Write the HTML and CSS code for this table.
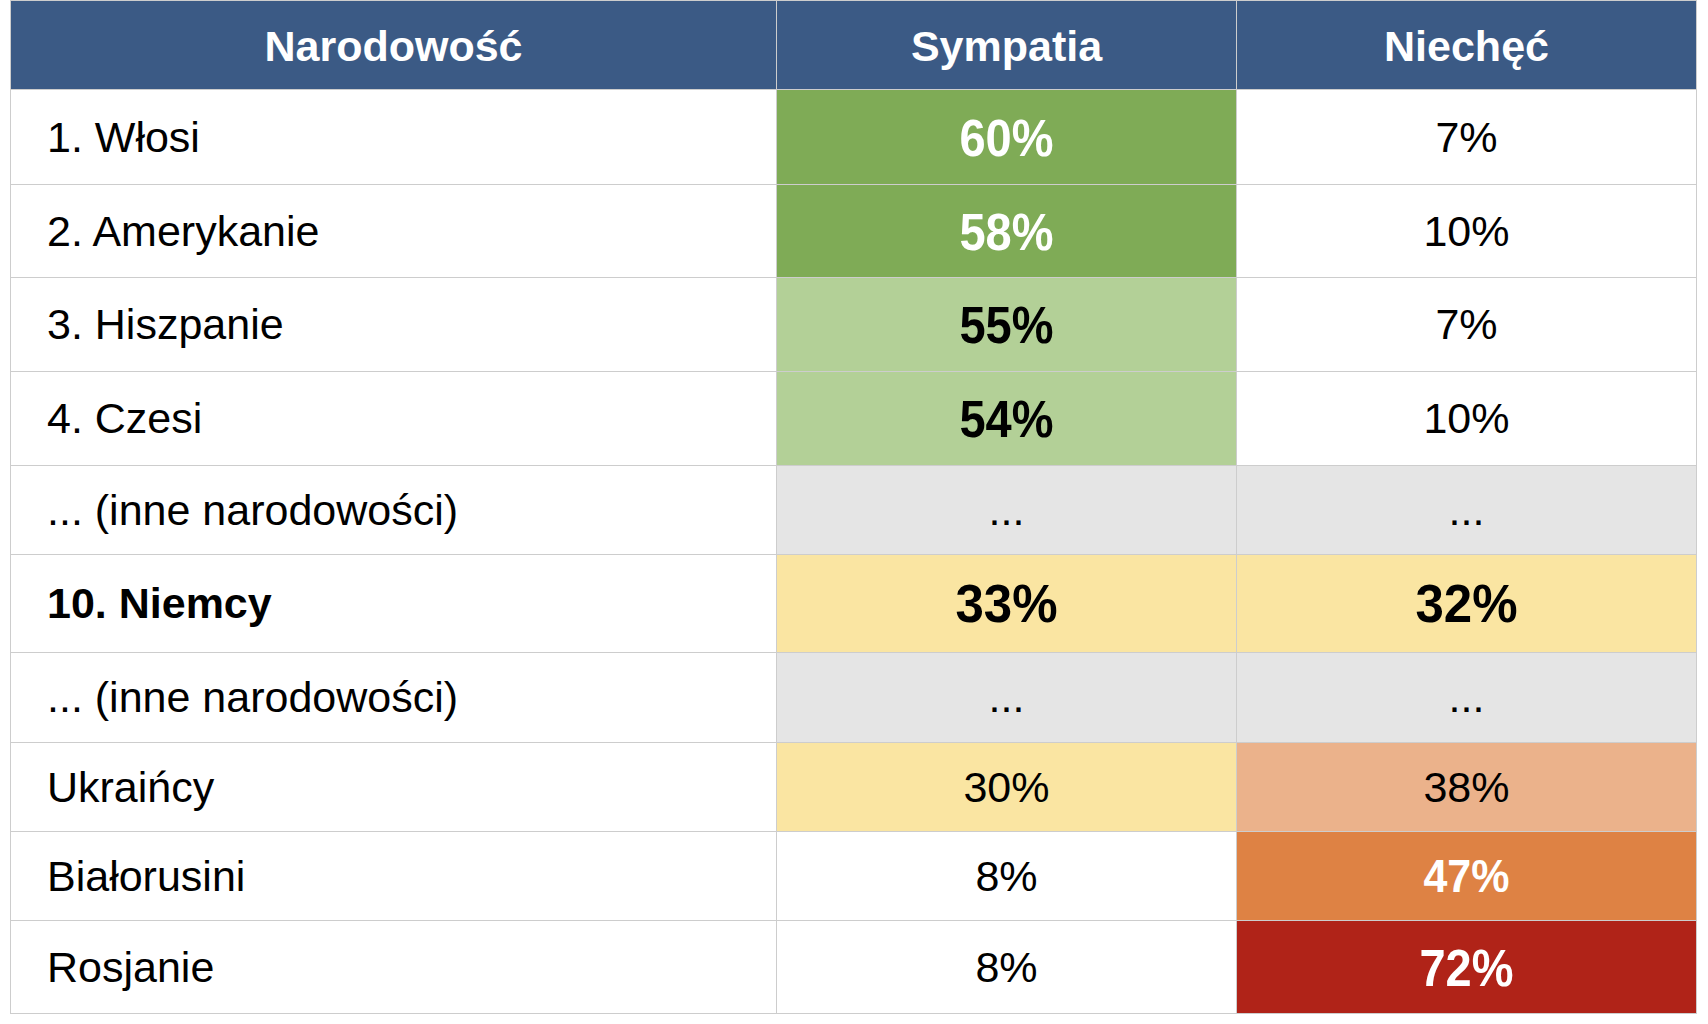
FILE: index.html
```html
<!DOCTYPE html>
<html lang="pl">
<head>
<meta charset="utf-8">
<title>Sympatia i niechęć</title>
<link rel="stylesheet" href="styles.css">
</head>
<body>
<div class="table">
  <div class="cell head">Narodowość</div>
  <div class="cell head">Sympatia</div>
  <div class="cell head">Niechęć</div>

  <div class="cell name">1. Włosi</div>
  <div class="cell val green-dark"><span class="b">60%</span></div>
  <div class="cell val">7%</div>

  <div class="cell name">2. Amerykanie</div>
  <div class="cell val green-dark"><span class="b">58%</span></div>
  <div class="cell val">10%</div>

  <div class="cell name">3. Hiszpanie</div>
  <div class="cell val green-light"><span class="b">55%</span></div>
  <div class="cell val">7%</div>

  <div class="cell name">4. Czesi</div>
  <div class="cell val green-light"><span class="b">54%</span></div>
  <div class="cell val">10%</div>

  <div class="cell name">... (inne narodowości)</div>
  <div class="cell val grey">...</div>
  <div class="cell val grey">...</div>

  <div class="cell name strong">10. Niemcy</div>
  <div class="cell val yellow"><span class="b big">33%</span></div>
  <div class="cell val yellow"><span class="b big">32%</span></div>

  <div class="cell name">... (inne narodowości)</div>
  <div class="cell val grey">...</div>
  <div class="cell val grey">...</div>

  <div class="cell name">Ukraińcy</div>
  <div class="cell val yellow">30%</div>
  <div class="cell val peach">38%</div>

  <div class="cell name">Białorusini</div>
  <div class="cell val">8%</div>
  <div class="cell val orange"><span class="b small">47%</span></div>

  <div class="cell name">Rosjanie</div>
  <div class="cell val">8%</div>
  <div class="cell val red"><span class="b">72%</span></div>
</div>
</body>
</html>
```

FILE: styles.css
```css
html, body {
  margin: 0;
  padding: 0;
  background: #ffffff;
}

body {
  font-family: "Liberation Sans", Arial, sans-serif;
  color: #000;
}

.table {
  margin-left: 10px;
  width: 1687px;
  display: grid;
  grid-template-columns: 765px 459px 459px;
  grid-template-rows: 88px 94px 92px 93px 93px 88px 97px 89px 88px 88px 92px;
  gap: 1px;
  padding: 1px;
  background: #cdcdcd;
  box-sizing: border-box;
}

.cell {
  background: #ffffff;
  display: flex;
  align-items: center;
  font-size: 43px;
  line-height: 1;
}

.head {
  background: #3b5a85;
  color: #ffffff;
  font-weight: bold;
  justify-content: center;
  padding-top: 2px;
}

.name {
  padding-left: 36px;
}

.strong {
  font-weight: bold;
}

.val {
  justify-content: center;
  padding-top: 0;
  font-size: 43px;
}

.b {
  display: inline-block;
  font-weight: bold;
  font-size: 47px;
  transform: scaleY(1.1);
}

.b.big {
  font-size: 51px;
  transform: scaleY(1.06);
}

.b.small {
  font-size: 43px;
  transform: scaleY(1.07);
}

.green-dark { background: #7fab56; color: #ffffff; }
.green-light { background: #b3d097; }
.grey { background: #e5e5e5; }
.yellow { background: #fae5a2; }
.peach { background: #ebb28b; }
.orange { background: #de8244; color: #ffffff; }
.red { background: #b02318; color: #ffffff; }
```
